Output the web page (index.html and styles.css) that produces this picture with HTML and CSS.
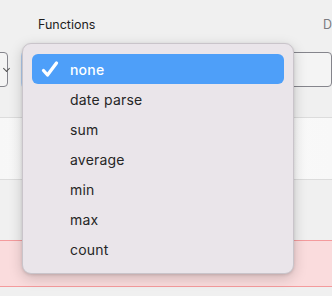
FILE: index.html
```html
<!DOCTYPE html>
<html>
<head>
<meta charset="utf-8">
<link rel="stylesheet" href="styles.css">
</head>
<body>
<div class="page">
  <div class="labels">
    <div class="label l1"></div>
    <div class="label l2">Functions</div>
    <div class="label l3">D</div>
  </div>
  <div class="selects">
    <div class="select s1"><span class="chev"></span></div>
    <div class="select s2 focused"></div>
    <div class="select s3"></div>
  </div>
  <div class="row gap"></div>
  <div class="row white"></div>
  <div class="row gray"></div>
  <div class="row pink"></div>
  <div class="row gray"></div>

  <div class="menu">
    <div class="item active">
      <svg class="check" width="20" height="20" viewBox="0 0 20 20"><path d="M3.5 11.5 L7.5 16 L16.5 4" fill="none" stroke="#fff" stroke-width="3.3" stroke-linecap="round" stroke-linejoin="round"/></svg>
      <span>none</span>
    </div>
    <div class="item"><span>date parse</span></div>
    <div class="item"><span>sum</span></div>
    <div class="item"><span>average</span></div>
    <div class="item"><span>min</span></div>
    <div class="item"><span>max</span></div>
    <div class="item"><span>count</span></div>
  </div>
</div>
</body>
</html>
```

FILE: styles.css
```css
html, body {
  margin: 0;
  padding: 0;
}
body {
  background: #f0f0f0;
  font-family: Inter, "Liberation Sans", sans-serif;
  width: 332px;
  height: 296px;
  overflow: hidden;
}
.page {
  position: relative;
  width: 332px;
  height: 296px;
  overflow: hidden;
}
.labels {
  display: flex;
  gap: 16px;
  margin-left: -100px;
  padding-top: 17px;
  height: 20px;
  font-size: 12.5px;
  line-height: 15px;
  color: #1e1e1e;
}
.label.l1 { width: 122px; }
.label.l2 { width: 269px; }
.label.l3 { color: #7b7b80; }
.selects {
  display: flex;
  gap: 15px;
  margin-left: -100px;
  margin-top: 15px;
  height: 35px;
}
.select {
  box-sizing: border-box;
  height: 35px;
  border: 1.5px solid #85858c;
  border-radius: 4px;
  background: #f4f4f4;
  position: relative;
}
.s1 { width: 122px; }
.s2 { width: 270px; margin-left: 1px; }
.s3 { width: 60px; }
.focused {
  border-color: #6ea5ef;
  box-shadow: 0 0 0 3px #b4cff3;
}
.chev {
  position: absolute;
  left: 103px;
  top: 13px;
  width: 4px;
  height: 4px;
  border-right: 1.2px solid #555;
  border-bottom: 1.2px solid #555;
  transform: rotate(45deg);
}
.row { box-sizing: border-box; }
.row.gap { height: 30px; }
.row.white {
  height: 63px;
  border-top: 1px solid #dcdcdc;
  border-bottom: 1px solid #dcdcdc;
  background: linear-gradient(90deg, #f7f7f7, #fbfbfb 50%, #f8f8f8);
}
.row.gray { height: 60px; }
.row.pink {
  height: 47px;
  background: #fadcdd;
  border-top: 1px solid #f49b9d;
  border-bottom: 1px solid #f49b9d;
}
.menu {
  position: absolute;
  left: 22px;
  top: 43px;
  width: 272px;
  box-sizing: border-box;
  padding: 10px 9px 9px;
  background: #eae5ea;
  border: 1px solid #c9c4ca;
  border-radius: 9px;
  box-shadow: 0 4px 14px rgba(0,0,0,0.18), 0 1px 3px rgba(0,0,0,0.12);
}
.item {
  position: relative;
  height: 30px;
  display: flex;
  align-items: center;
  padding-left: 38px;
  font-size: 14px;
  color: #262626;
  border-radius: 6px;
  letter-spacing: 0.2px;
}
.item.active {
  background: #4e9ff9;
  color: #fff;
  font-weight: 500;
}
.check {
  position: absolute;
  left: 8px;
  top: 5px;
}
```
